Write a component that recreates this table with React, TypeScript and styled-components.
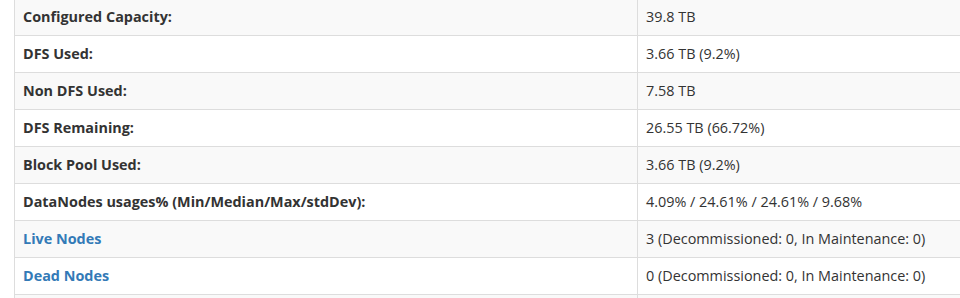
import React from "react";
import styled, { createGlobalStyle } from "styled-components";

const GlobalStyle = createGlobalStyle`
  html, body {
    margin: 0;
    padding: 0;
    overflow: hidden;
    background: #fff;
  }
  body {
    font-family: "Open Sans", "Noto Sans", "Liberation Sans", sans-serif;
    font-size: 14.4px;
    line-height: 20px;
    color: #333;
  }
`;

const Page = styled.div`
  padding-left: 14px;
  margin-top: -2px;
`;

const Table = styled.table`
  width: 1000px;
  border-collapse: collapse;
  border-spacing: 0;
  border-left: 1px solid #ddd;
`;

const Row = styled.tr<{ $striped: boolean }>`
  background-color: ${(p) => (p.$striped ? "#f9f9f9" : "#fff")};
`;

const Th = styled.th`
  width: 606px;
  text-align: left;
  font-weight: 700;
  padding: 8px;
  border-top: 1px solid #ddd;
  border-right: 1px solid #ddd;
  vertical-align: top;
  white-space: nowrap;
`;

const Td = styled.td`
  padding: 8px;
  border-top: 1px solid #ddd;
  vertical-align: top;
  white-space: nowrap;
`;

const Link = styled.a`
  color: #337ab7;
  text-decoration: none;
`;

type Item = { label: string; value: string; link?: boolean };

const items: Item[] = [
  { label: "Configured Capacity:", value: "39.8 TB" },
  { label: "DFS Used:", value: "3.66 TB (9.2%)" },
  { label: "Non DFS Used:", value: "7.58 TB" },
  { label: "DFS Remaining:", value: "26.55 TB (66.72%)" },
  { label: "Block Pool Used:", value: "3.66 TB (9.2%)" },
  {
    label: "DataNodes usages% (Min/Median/Max/stdDev):",
    value: "4.09% / 24.61% / 24.61% / 9.68%",
  },
  { label: "Live Nodes", value: "3 (Decommissioned: 0, In Maintenance: 0)", link: true },
  { label: "Dead Nodes", value: "0 (Decommissioned: 0, In Maintenance: 0)", link: true },
  { label: "", value: "" },
];

export default function App() {
  return (
    <>
      <GlobalStyle />
      <Page>
        <Table>
          <tbody>
            {items.map((it, i) => (
              <Row key={i} $striped={i % 2 === 0}>
                <Th>{it.link ? <Link href="#">{it.label}</Link> : it.label || "\u00a0"}</Th>
                <Td>{it.value || "\u00a0"}</Td>
              </Row>
            ))}
          </tbody>
        </Table>
      </Page>
    </>
  );
}
